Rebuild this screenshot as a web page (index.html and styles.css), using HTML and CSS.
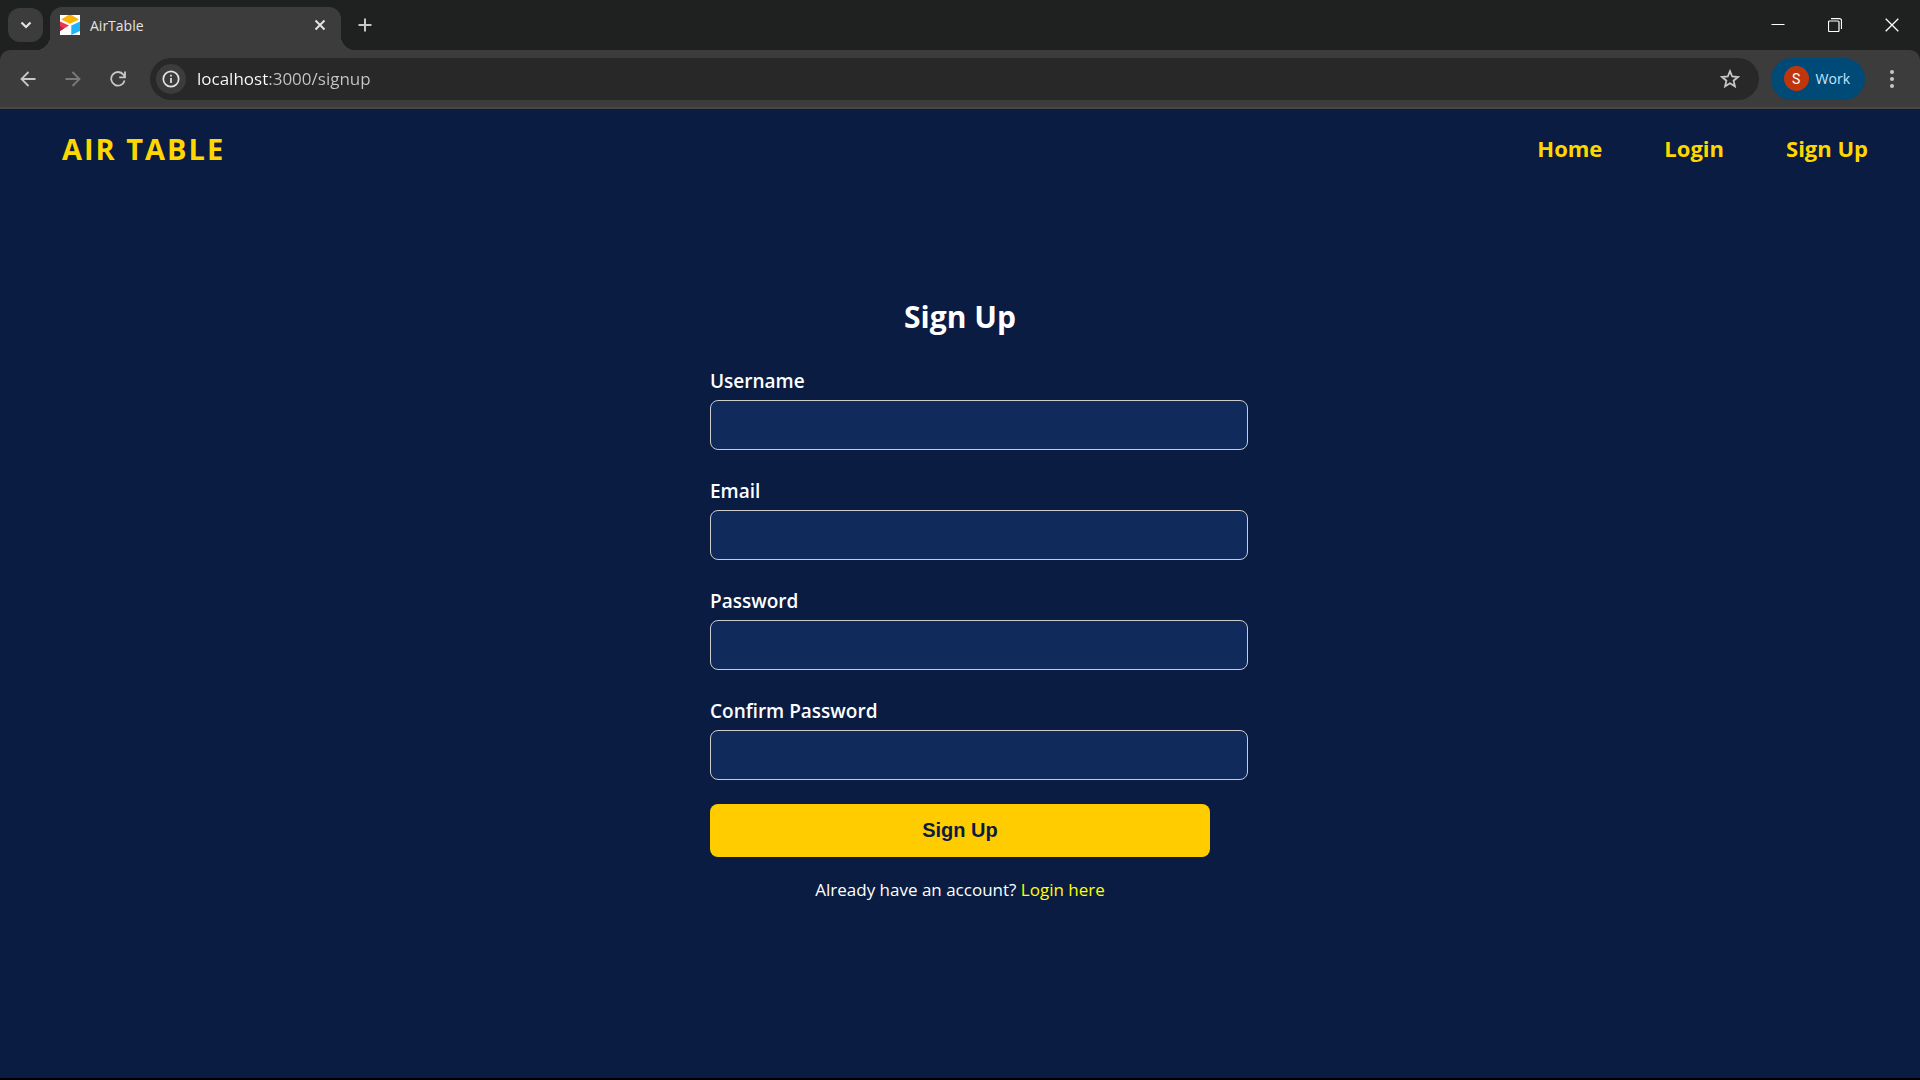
FILE: index.html
```html
<!DOCTYPE html>
<html lang="en">
<head>
<meta charset="utf-8">
<title>AirTable</title>
<link rel="stylesheet" href="styles.css">
</head>
<body>
<div class="window">
  <div class="tabstrip">
    <button class="tab-search" aria-label="Search tabs">
      <svg width="12" height="8" viewBox="0 0 12 8"><path d="M1.5 1.5 6 6l4.500-4.500" fill="none" stroke="#e3e3e3" stroke-width="2.200"/></svg>
    </button>
    <div class="tab">
      <svg width="20" height="20" viewBox="0 0 20 20"><path fill="#fff" d="M0 0h20v20H0z"/><path fill="#fcb400" d="M1 4.500 8.500 0h3L19 4.500l-9 4.300z"/><path fill="#e8384f" d="M0 6.500 9 10.500 0 16z"/><path fill="#b3213f" d="M4 13.600 0 11v5z"/><path fill="#20b4f8" d="M11.300 10.500 20 6.500V16l-8.700 4z"/></svg>
      <span class="tab-title">AirTable</span>
      <button class="icon-button" aria-label="Close tab">
        <svg width="12" height="12" viewBox="0 0 12 12"><path d="m1.500 1.500 9 9m0-9-9 9" stroke="#e3e3e3" stroke-width="2"/></svg>
      </button>
    </div>
    <button class="icon-button new-tab" aria-label="New tab">
      <svg width="14" height="14" viewBox="0 0 14 14"><path d="M7 .5v13M.5 7h13" stroke="#c7c7c7" stroke-width="2"/></svg>
    </button>
    <div class="window-controls">
      <button class="control" aria-label="Minimize"><svg width="14" height="14" viewBox="0 0 14 14"><path d="M.5 6.500h13" stroke="#fff"/></svg></button>
      <button class="control" aria-label="Restore"><svg width="14" height="14" viewBox="0 0 14 14"><rect x=".5" y="3" width="10.500" height="10.500" rx="1" fill="none" stroke="#fff" stroke-width="1.200"/><path d="M3 .7h8.500a2 2 0 0 1 2 2V11" fill="none" stroke="#fff" stroke-width="1.200"/></svg></button>
      <button class="control" aria-label="Close"><svg width="14" height="14" viewBox="0 0 14 14"><path d="m.7.7 12.600 12.600m0-12.600L.7 13.300" stroke="#fff" stroke-width="1.300"/></svg></button>
    </div>
  </div>
  <div class="toolbar">
    <div class="history">
      <button class="icon-button" aria-label="Back"><svg width="16" height="16" viewBox="0 0 16 16"><path d="M15.500 8h-14M8.500 1 1.500 8l7 7" fill="none" stroke="#c7c7c7" stroke-width="1.800"/></svg></button>
      <button class="icon-button" aria-label="Forward"><svg width="16" height="16" viewBox="0 0 16 16"><path d="M.5 8h14M7.500 1l7 7-7 7" fill="none" stroke="#7b7b7b" stroke-width="1.800"/></svg></button>
      <button class="icon-button" aria-label="Reload"><svg width="16" height="16" viewBox="0 0 16 16"><path d="M14.600 9.500A6.800 6.800 0 1 1 13.500 3.800L14.700 5.500M15 .5v5.800H9.200" fill="none" stroke="#c7c7c7" stroke-width="1.800"/></svg></button>
    </div>
    <div class="omnibox">
      <button class="site-info" aria-label="View site information"><svg width="18" height="18" viewBox="0 0 18 18"><circle cx="9" cy="9" r="7.700" fill="none" stroke="#e3e3e3" stroke-width="1.700"/><path d="M9 8v5M9 4.700v1.800" stroke="#e3e3e3" stroke-width="1.700"/></svg></button>
      <input class="url" type="text" value="localhost:3000/signup" aria-label="Address">
      <button class="icon-button" aria-label="Bookmark this tab"><svg width="20" height="20" viewBox="0 0 20 20"><path d="m10 2.200 2.200 5.300 5.700.5-4.300 3.700 1.300 5.600L10 14.300l-4.900 3L6.400 11.700 2.100 8l5.700-.5z" fill="none" stroke="#c7c7c7" stroke-width="1.800"/></svg></button>
    </div>
    <button class="profile"><span class="avatar">S</span>Work</button>
    <button class="icon-button menu" aria-label="Menu"><svg width="4" height="18" viewBox="0 0 4 18"><g fill="#c7c7c7"><circle cx="2" cy="2" r="2"/><circle cx="2" cy="9" r="2"/><circle cx="2" cy="16" r="2"/></g></svg></button>
  </div>
  <div class="page">
    <header class="site-header">
      <a class="brand" href="#">AIR TABLE</a>
      <nav class="site-nav">
        <a href="#">Home</a>
        <a href="#">Login</a>
        <a href="#">Sign Up</a>
      </nav>
    </header>
    <main class="signup">
      <h1 class="signup-title">Sign Up</h1>
      <form class="signup-form">
        <div class="fields">
          <div class="field"><label for="username">Username</label><input id="username" type="text"></div>
          <div class="field"><label for="email">Email</label><input id="email" type="email"></div>
          <div class="field"><label for="password">Password</label><input id="password" type="password"></div>
          <div class="field"><label for="confirm">Confirm Password</label><input id="confirm" type="password"></div>
        </div>
        <button class="submit" type="submit">Sign Up</button>
      </form>
      <p class="switch">Already have an account? <a href="#">Login here</a></p>
    </main>
  </div>
</div>
</body>
</html>
```
FILE: styles.css
```css
* { box-sizing: border-box; }

body {
  margin: 0 0 2px;
  background: #000;
  color: #fff;
  font-family: "Segoe UI", "Open Sans", "Noto Sans", sans-serif;
}

button {
  padding: 0;
  border: 0;
  background: none;
  color: inherit;
  font-family: inherit;
}

a { text-decoration: none; }

svg { display: block; flex: none; }

.window {
  display: flex;
  flex-direction: column;
  min-height: calc(100vh - 2px);
  background: #1f2120;
}

/* Browser frame */
.tabstrip {
  display: flex;
  align-items: center;
  height: 50px;
  padding-left: 8px;
}

.tab-search {
  display: grid;
  place-items: center;
  width: 35px;
  height: 34px;
  border-radius: 12px;
  background: #3c3c3c;
}

.tab {
  position: relative;
  display: flex;
  align-items: center;
  align-self: flex-end;
  gap: 10px;
  width: 291px;
  height: 43px;
  margin-left: 7px;
  padding: 0 11px 7px 10px;
  border-radius: 12px 12px 0 0;
  background: #3c3c3c;
}

.tab::before,
.tab::after {
  content: "";
  position: absolute;
  bottom: 0;
  width: 14px;
  height: 14px;
}

.tab::before {
  right: 100%;
  background: radial-gradient(circle at 0 0, transparent 14px, #3c3c3c 14px);
}

.tab::after {
  left: 100%;
  background: radial-gradient(circle at 100% 0, transparent 14px, #3c3c3c 14px);
}

.tab-title {
  flex: 1;
  color: #e3e3e3;
  font-size: 14px;
}

.icon-button {
  display: grid;
  place-items: center;
  width: 20px;
  height: 32px;
}

.new-tab { margin-left: 14px; }

.window-controls {
  display: flex;
  margin-left: auto;
}

.control {
  display: grid;
  place-items: center;
  width: 57px;
  height: 50px;
}

.toolbar {
  display: flex;
  align-items: center;
  height: 59px;
  padding: 0 18px;
  border-bottom: 2px solid #484848;
  border-radius: 10px 10px 0 0;
  background: #3c3c3c;
}

.history {
  display: flex;
  gap: 25px;
  margin-right: 22px;
}

.omnibox {
  display: flex;
  flex: 1;
  align-items: center;
  height: 42px;
  padding: 0 19px 0 6px;
  border-radius: 21px;
  background: #282828;
}

.site-info {
  display: grid;
  place-items: center;
  width: 30px;
  height: 30px;
  border-radius: 50%;
  background: #3c3c3c;
}

.url {
  flex: 1;
  min-width: 0;
  height: 32px;
  padding: 0 11px;
  border: 0;
  background: linear-gradient(90deg, #fff 83px, #c7c7c7 83px) text;
  color: transparent;
  font-family: inherit;
  font-size: 17px;
}

.profile {
  display: flex;
  align-items: center;
  gap: 7px;
  height: 42px;
  margin-left: 12px;
  padding: 0 15px 0 13px;
  border-radius: 21px;
  background: #004a77;
  color: #c2e7ff;
  font-size: 14px;
}

.avatar {
  display: grid;
  place-items: center;
  width: 25px;
  height: 25px;
  border-radius: 50%;
  background: #bf360c;
  color: #fff;
  font-family: Roboto, sans-serif;
  font-size: 14px;
}

.menu { margin-left: 17px; }

/* Site */
.page {
  flex: 1;
  background: #0a1c42;
}

.site-header {
  display: flex;
  align-items: center;
  justify-content: space-between;
  height: 78px;
  padding: 0 52px 0 62px;
}

.brand,
.site-nav a {
  color: #ffd700;
  font-weight: 700;
}

.brand {
  font-size: 29px;
  letter-spacing: 2px;
}

.site-nav {
  display: flex;
  gap: 62px;
  font-size: 22px;
}

.signup {
  width: 500px;
  margin: 0 auto;
  padding-top: 108px;
}

.signup-title {
  margin: 0 0 30px;
  font-size: 30px;
  line-height: 44px;
  text-align: center;
}

.signup-form {
  display: grid;
  gap: 24px;
}

.fields {
  display: grid;
  gap: 29px;
}

.field label {
  display: block;
  margin-bottom: 7px;
  font-size: 19px;
  font-weight: 600;
  line-height: 24px;
}

.field input {
  display: block;
  box-sizing: content-box;
  width: 100%;
  height: 48px;
  padding: 0 18px;
  border: 1px solid #ccc;
  border-radius: 8px;
  background: #102a5c;
  color: #fff;
  font-size: 20px;
}

.submit {
  height: 53px;
  border-radius: 8px;
  background: #fc0;
  color: #0a1c42;
  font-family: "Liberation Sans", Arial, sans-serif;
  font-size: 20px;
  font-weight: 700;
}

.switch {
  margin: 20px 0;
  font-size: 17px;
  line-height: 26px;
  text-align: center;
}

.switch a { color: #ff0; }
```
